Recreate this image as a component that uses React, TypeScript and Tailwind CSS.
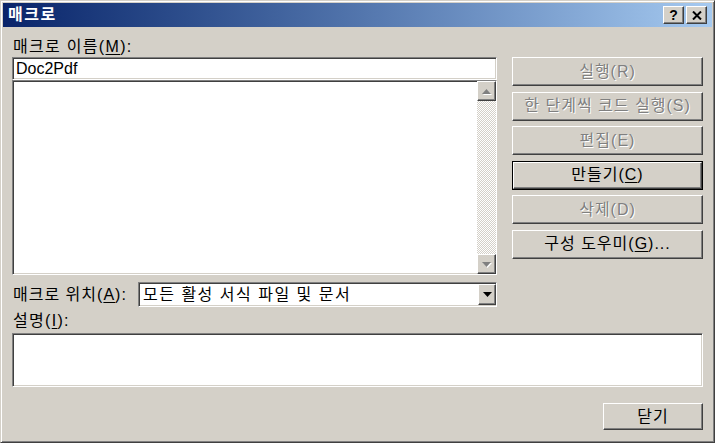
const font = "font-['Liberation_Sans','Noto_Sans_CJK_KR',sans-serif]";

const raised =
  "border border-t-white border-l-white border-r-[#404040] border-b-[#404040] shadow-[inset_-1px_-1px_#808080]";
const sunken =
  "border border-t-[#808080] border-l-[#808080] border-r-white border-b-white shadow-[inset_1px_1px_#404040,inset_-1px_-1px_#d4d0c8]";
const disabledText = "text-[#808080] [text-shadow:1px_1px_#fff]";

function U({ children }: { children: string }) {
  return <span className="underline underline-offset-2">{children}</span>;
}

function Btn({
  children,
  disabled,
  isDefault,
  className = "",
}: {
  children: React.ReactNode;
  disabled?: boolean;
  isDefault?: boolean;
  className?: string;
}) {
  if (isDefault) {
    return (
      <div className={`flex border border-black ${className}`}>
        <div
          className={`flex flex-1 items-center justify-center bg-[#d4d0c8] text-[16px] tracking-[1px] text-black ${raised}`}
        >
          {children}
        </div>
      </div>
    );
  }
  return (
    <div
      className={`flex items-center justify-center bg-[#d4d0c8] text-[16px] tracking-[1px] ${raised} ${
        disabled ? disabledText : "text-black"
      } ${className}`}
    >
      {children}
    </div>
  );
}

function Arrow({ dir, color }: { dir: "up" | "down"; color: string }) {
  return (
    <svg width="9" height="5" viewBox="0 0 9 5">
      {dir === "up" ? (
        <path d="M4.5 0 L9 5 L0 5 Z" fill={color} />
      ) : (
        <path d="M0 0 L9 0 L4.5 5 Z" fill={color} />
      )}
    </svg>
  );
}

function ScrollBtn({ dir }: { dir: "up" | "down" }) {
  return (
    <div
      className={`flex h-[20px] w-[19px] items-center justify-center bg-[#d4d0c8] ${raised}`}
    >
      <div className="relative">
        <div className="absolute left-[1px] top-[1px]">
          <Arrow dir={dir} color="#ffffff" />
        </div>
        <div className="relative">
          <Arrow dir={dir} color="#808080" />
        </div>
      </div>
    </div>
  );
}

export default function App() {
  return (
    <div
      className={`flex h-[443px] w-[715px] flex-col bg-[#d4d0c8] p-[2px] ${font} border border-t-[#d4d0c8] border-l-[#d4d0c8] border-r-[#404040] border-b-[#404040] shadow-[inset_1px_1px_#fff,inset_-1px_-1px_#808080]`}
    >
      {/* Title bar */}
      <div className="flex h-[24px] items-center bg-gradient-to-r from-[#0a246a] to-[#a6caf0] pl-[5px] pr-[5px]">
        <span className="flex-1 text-[16px] font-bold tracking-[1.5px] text-white">
          매크로
        </span>
        <div className="flex gap-[2px]">
          <div
            className={`flex h-[18px] w-[21px] items-center justify-center bg-[#d4d0c8] text-[14px] font-bold leading-none text-black ${raised}`}
          >
            ?
          </div>
          <div
            className={`flex h-[18px] w-[21px] items-center justify-center bg-[#d4d0c8] ${raised}`}
          >
            <svg width="10" height="9" viewBox="0 0 10 9">
              <path d="M1 0.5 L9 8.5 M9 0.5 L1 8.5" stroke="#000" strokeWidth="2" />
            </svg>
          </div>
        </div>
      </div>

      {/* Body */}
      <div className="flex flex-1 flex-col pl-[9px] pr-[9px] pt-[9px] text-[16px] text-black">
        <div className="flex gap-[15px]">
          {/* Left column */}
          <div className="flex w-[485px] flex-col">
            <div className="h-[21px] pl-[1px] leading-[21px] tracking-[1.3px]">
              매크로 이름(<U>M</U>):
            </div>
            <div className={`flex h-[23px] items-center bg-white pl-[3px] ${sunken}`}>
              Doc2Pdf
            </div>
            <div className={`flex h-[195px] justify-end bg-white ${sunken}`}>
              <div className="flex w-[19px] flex-col">
                <ScrollBtn dir="up" />
                <div className="flex-1 bg-[repeating-conic-gradient(#d4d0c8_0_25%,#ffffff_0_50%)] bg-[length:2px_2px]" />
                <ScrollBtn dir="down" />
              </div>
            </div>
            <div className="mt-[7px] flex h-[25px] items-center">
              <div className="w-[126px] whitespace-nowrap pl-[1px] tracking-[1px]">
                매크로 위치(<U>A</U>):
              </div>
              <div className={`flex h-[25px] flex-1 items-center bg-white ${sunken}`}>
                <span className="flex-1 pl-[4px] tracking-[1.5px]">
                  모든 활성 서식 파일 및 문서
                </span>
                <div
                  className={`flex h-[21px] w-[18px] items-center justify-center bg-[#d4d0c8] ${raised}`}
                >
                  <Arrow dir="down" color="#000000" />
                </div>
              </div>
            </div>
          </div>

          {/* Right column */}
          <div className="flex w-[191px] flex-col gap-[5.6px] pt-[21px]">
            <Btn disabled className="h-[29px]">
              실행(R)
            </Btn>
            <Btn disabled className="h-[29px]">
              한 단계씩 코드 실행(S)
            </Btn>
            <Btn disabled className="h-[29px]">
              편집(E)
            </Btn>
            <Btn isDefault className="h-[29px]">
              <span>
                만들기(<U>C</U>)
              </span>
            </Btn>
            <Btn disabled className="h-[29px]">
              삭제(D)
            </Btn>
            <Btn className="h-[29px]">
              <span>
                구성 도우미(<U>G</U>)...
              </span>
            </Btn>
          </div>
        </div>

        <div className="mt-[3px] h-[21px] pl-[1px] leading-[21px] tracking-[1.3px]">
          설명(<U>I</U>):
        </div>
        <div className={`mt-[2px] h-[54px] bg-white ${sunken}`} />

        <div className="mt-[16px] flex justify-end">
          <Btn className="h-[27px] w-[100px]">닫기</Btn>
        </div>
      </div>
    </div>
  );
}
